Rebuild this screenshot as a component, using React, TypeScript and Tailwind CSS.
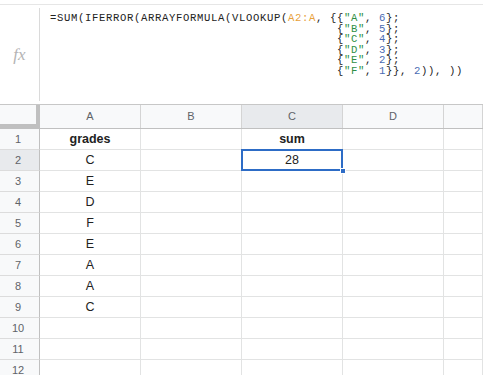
const cols = ["A", "B", "C", "D", ""];

const cells: Record<string, string> = {
  A1: "grades",
  C1: "sum",
  A2: "C",
  C2: "28",
  A3: "E",
  A4: "D",
  A5: "F",
  A6: "E",
  A7: "A",
  A8: "A",
  A9: "C",
};

const rows = Array.from({ length: 12 }, (_, i) => i + 1);

function Str({ children }: { children: string }) {
  return <span className="text-[#2f8f45]">{children}</span>;
}

function Num({ children }: { children: string }) {
  return <span className="text-[#4a6bb3]">{children}</span>;
}

function FormulaBar() {
  const pad = " ".repeat(41);
  return (
    <div className="mt-[4px] flex h-[101px] border-y border-t-[#e6e6e6] border-b-[#c7c7c7]">
      <div className="my-[3px] flex w-[40px] shrink-0 items-center justify-center border-r border-[#dadada]">
        <span className="font-['Liberation_Serif',serif] text-[17px] italic text-[#b4b4b4]">fx</span>
      </div>
      <pre className="pl-[10px] pt-[8px] font-['Liberation_Mono',monospace] text-[10.6px] leading-[10.6px] tracking-[0.64px] text-[#222]">
        {"=SUM(IFERROR(ARRAYFORMULA(VLOOKUP("}
        <span className="text-[#e8a13a]">A2:A</span>
        {", {{"}
        <Str>"A"</Str>
        {", "}
        <Num>6</Num>
        {"};\n" + pad + "{"}
        <Str>"B"</Str>
        {", "}
        <Num>5</Num>
        {"};\n" + pad + "{"}
        <Str>"C"</Str>
        {", "}
        <Num>4</Num>
        {"};\n" + pad + "{"}
        <Str>"D"</Str>
        {", "}
        <Num>3</Num>
        {"};\n" + pad + "{"}
        <Str>"E"</Str>
        {", "}
        <Num>2</Num>
        {"};\n" + pad + "{"}
        <Str>"F"</Str>
        {", "}
        <Num>1</Num>
        {"}}, "}
        <Num>2</Num>
        {")), ))"}
      </pre>
    </div>
  );
}

function HeaderRow() {
  return (
    <div className="flex h-[24px] border-b border-[#c0c0c0] bg-[#f8f9fa]">
      <div className="relative w-[40px] shrink-0">
        <div className="absolute right-0 top-0 h-full w-[4px] bg-[#c0c0c0]" />
        <div className="absolute bottom-0 left-0 h-[4px] w-full bg-[#c0c0c0]" />
      </div>
      {cols.map((c, i) => (
        <div
          key={i}
          className={
            "flex items-center justify-center border-r border-[#d4d4d4] text-[11px] text-[#606368] " +
            (i < 4 ? "w-[101px] shrink-0 " : "flex-1 ") +
            (c === "C" ? "bg-[#e8eaed]" : "")
          }
        >
          {c}
        </div>
      ))}
    </div>
  );
}

function Row({ n }: { n: number }) {
  return (
    <div className="relative flex h-[21px]">
      <div
        className={
          "flex w-[40px] shrink-0 items-center justify-center border-b border-r border-b-[#dcdcdc] border-r-[#c0c0c0] pr-[3px] text-[11px] text-[#606368] " +
          (n === 2 ? "bg-[#e8eaed]" : "bg-[#f8f9fa]")
        }
      >
        {n}
      </div>
      {cols.map((c, i) => {
        const v = c ? cells[c + n] : undefined;
        const selected = c === "C" && n === 2;
        return (
          <div
            key={i}
            className={
              "relative flex items-center justify-center border-b border-r border-[#e2e3e3] text-[12.5px] text-[#222] " +
              (i < 4 ? "w-[101px] shrink-0 " : "flex-1 ") +
              (n === 1 ? "font-bold " : "") +
              (selected ? "z-10" : "")
            }
          >
            {v}
            {selected && (
              <>
                <div className="pointer-events-none absolute -left-[1px] -top-[1px] h-[22px] w-[102px] border-2 border-[#2d6cc6]" />
                <div className="absolute -bottom-[4px] -right-[4px] h-[6px] w-[6px] border border-white bg-[#2d6cc6]" />
              </>
            )}
          </div>
        );
      })}
    </div>
  );
}

export default function App() {
  return (
    <div className="h-[375px] w-[483px] overflow-hidden bg-white font-['Liberation_Sans',Arial,sans-serif]">
      <FormulaBar />
      <HeaderRow />
      {rows.map((n) => (
        <div key={n} className={n === 2 ? "relative z-10" : ""}>
          <Row n={n} />
        </div>
      ))}
    </div>
  );
}
